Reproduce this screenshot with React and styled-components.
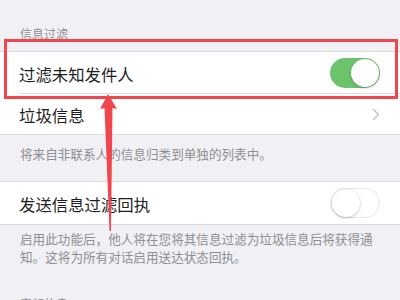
import React from 'react'
import styled, { createGlobalStyle } from 'styled-components'

const Global = createGlobalStyle`
  html, body { margin: 0; padding: 0; }
  body {
    background: #f1f1f5;
    font-family: "Noto Sans CJK SC", "Noto Sans", sans-serif;
    overflow: hidden;
  }
`;

const Page = styled.div`
  position: relative;
  width: 400px;
  height: 300px;
  overflow: hidden;
  background: #f1f1f5;
`;

const SectionHeader = styled.div`
  padding: ${p => p.top || 26}px 20px 0;
  height: 16px;
  line-height: 16px;
  font-size: 12px;
  color: #8e8e93;
  margin-bottom: ${p => p.bottom || 10}px;
`;

const Group = styled.div`
  background: #fff;
  border-top: 1px solid #dcdce0;
  border-bottom: 1px solid #dcdce0;
`;

const Row = styled.div`
  height: ${p => p.h || 42}px;
  display: flex;
  align-items: center;
  justify-content: space-between;
  margin-left: 19px;
  padding-right: 20px;
  padding-top: 2px;
  box-sizing: border-box;
  border-bottom: ${p => (p.divider ? '1px solid #e0e0e4' : 'none')};
`;

const Label = styled.span`
  font-size: 16.4px;
  color: #1f1f1f;
`;

const Footer = styled.div`
  padding: ${p => p.top}px 20px 0;
  font-size: 12.6px;
  line-height: 18px;
  color: #8e8e93;
  height: ${p => p.h}px;
`;

const Track = styled.div`
  width: 50px;
  height: 30px;
  margin-top: -2px;
  border-radius: 15px;
  box-sizing: border-box;
  background: ${p => (p.on ? '#6cc36c' : '#fff')};
  border: ${p => (p.on ? 'none' : '1.5px solid #e6e6ea')};
  display: flex;
  align-items: center;
  justify-content: ${p => (p.on ? 'flex-end' : 'flex-start')};
  padding: 1px;
`;

const Knob = styled.div`
  width: 28px;
  height: 28px;
  border-radius: 50%;
  background: #fff;
  box-shadow: 0 1px 3px rgba(0, 0, 0, 0.22), 0 0 0 0.5px rgba(0, 0, 0, 0.06);
`;

const Chevron = () => (
  <svg width="8" height="13" viewBox="0 0 8 13" style={{ marginTop: -2 }}>
    <path d="M1.5 1.5 L6.5 6.5 L1.5 11.5" fill="none" stroke="#c4c4c8" strokeWidth="1.6" strokeLinecap="round" strokeLinejoin="round" />
  </svg>
);

const Toggle = ({ on }) => (
  <Track on={on ? 1 : 0}>
    <Knob />
  </Track>
);

const Highlight = styled.div`
  position: absolute;
  left: 4px;
  top: 39px;
  width: 394px;
  height: 60px;
  box-sizing: border-box;
  border: 3px solid #f0474f;
  pointer-events: none;
`;

const ArrowLayer = styled.svg`
  position: absolute;
  left: 0;
  top: 0;
  pointer-events: none;
`;

export default function App() {
  return (
    <Page>
      <Global />
      <SectionHeader top={26} bottom={9}>信息过滤</SectionHeader>
      <Group>
        <Row divider h={42}>
          <Label>过滤未知发件人</Label>
          <Toggle on />
        </Row>
        <Row h={40}>
          <Label>垃圾信息</Label>
          <Chevron />
        </Row>
      </Group>
      <Footer top={10} h={36}>将来自非联系人的信息归类到单独的列表中。</Footer>
      <Group>
        <Row h={42}>
          <Label>发送信息过滤回执</Label>
          <Toggle />
        </Row>
      </Group>
      <Footer top={5} h={36}>启用此功能后，他人将在您将其信息过滤为垃圾信息后将获得通知。这将为所有对话启用送达状态回执。</Footer>
      <SectionHeader top={30} bottom={0}>音频信息</SectionHeader>
      <Highlight />
      <ArrowLayer width="400" height="300" viewBox="0 0 400 300">
        <polygon points="108,94 117,109 112.5,108 111,231 109.5,231 104.5,108 100,109" fill="#f0474f" />
      </ArrowLayer>
    </Page>
  )
}
